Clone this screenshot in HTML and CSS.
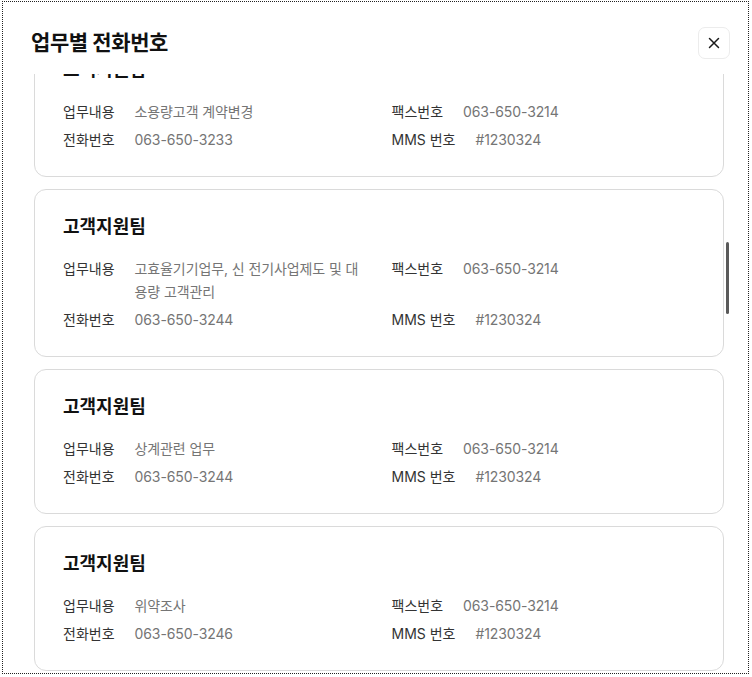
FILE: index.html
```html
<!DOCTYPE html>
<html lang="ko">
<head>
<meta charset="utf-8">
<title>업무별 전화번호</title>
<link rel="stylesheet" href="styles.css">
</head>
<body>
<div class="modal">
  <div class="header">
    <h1 class="title">업무별 전화번호</h1>
    <button class="close" type="button" aria-label="닫기">
      <svg width="12" height="12" viewBox="0 0 12 12"><path d="M1.5 1.5 L10.5 10.5 M10.5 1.5 L1.5 10.5" stroke="#1a1a1a" stroke-width="1.5" stroke-linecap="round" fill="none"/></svg>
    </button>
  </div>
  <div class="body">
    <div class="list">
      <div class="card">
        <h2 class="card-title">고객지원팀</h2>
        <div class="grid">
          <div class="item"><span class="label">업무내용</span><span class="value">소용량고객 계약변경</span></div>
          <div class="item"><span class="label">팩스번호</span><span class="value">063-650-3214</span></div>
          <div class="item"><span class="label">전화번호</span><span class="value">063-650-3233</span></div>
          <div class="item"><span class="label">MMS 번호</span><span class="value">#1230324</span></div>
        </div>
      </div>
      <div class="card">
        <h2 class="card-title">고객지원팀</h2>
        <div class="grid">
          <div class="item"><span class="label">업무내용</span><span class="value">고효율기기업무, 신 전기사업제도 및 대용량 고객관리</span></div>
          <div class="item"><span class="label">팩스번호</span><span class="value">063-650-3214</span></div>
          <div class="item"><span class="label">전화번호</span><span class="value">063-650-3244</span></div>
          <div class="item"><span class="label">MMS 번호</span><span class="value">#1230324</span></div>
        </div>
      </div>
      <div class="card">
        <h2 class="card-title">고객지원팀</h2>
        <div class="grid">
          <div class="item"><span class="label">업무내용</span><span class="value">상계관련 업무</span></div>
          <div class="item"><span class="label">팩스번호</span><span class="value">063-650-3214</span></div>
          <div class="item"><span class="label">전화번호</span><span class="value">063-650-3244</span></div>
          <div class="item"><span class="label">MMS 번호</span><span class="value">#1230324</span></div>
        </div>
      </div>
      <div class="card">
        <h2 class="card-title">고객지원팀</h2>
        <div class="grid">
          <div class="item"><span class="label">업무내용</span><span class="value">위약조사</span></div>
          <div class="item"><span class="label">팩스번호</span><span class="value">063-650-3214</span></div>
          <div class="item"><span class="label">전화번호</span><span class="value">063-650-3246</span></div>
          <div class="item"><span class="label">MMS 번호</span><span class="value">#1230324</span></div>
        </div>
      </div>
    </div>
    <div class="scroll-thumb"></div>
  </div>
</div>
</body>
</html>
```
FILE: styles.css
```css
* { box-sizing: border-box; }
html, body { margin: 0; padding: 0; background: #fff; }
body {
  font-family: Inter, "Noto Sans CJK KR", sans-serif;
  color: #222;
}
.modal {
  margin: 1px 0 0 2px;
  width: 747px;
  height: 673px;
  border: 1px dotted #222;
  display: flex;
  flex-direction: column;
  overflow: hidden;
  background: #fff;
}
.header {
  display: flex;
  justify-content: space-between;
  align-items: center;
  padding: 25px 18px 15px 28px;
  flex: none;
}
.title {
  margin: 0;
  font-size: 21px;
  line-height: 28px;
  font-weight: 700;
  color: #111;
  letter-spacing: -0.4px;
}
.close {
  width: 32px;
  height: 32px;
  border: 1px solid #ececec;
  border-radius: 7px;
  background: #fff;
  padding: 0;
  display: flex;
  align-items: center;
  justify-content: center;
}
.body {
  flex: 1;
  overflow: hidden;
  position: relative;
  padding: 0 24px 0 31px;
}
.list {
  margin-top: -42px;
  display: flex;
  flex-direction: column;
  gap: 12px;
}
.card {
  border: 1px solid #dadada;
  border-radius: 12px;
  padding: 27px 28px 25px;
  background: #fff;
}
.card-title {
  margin: 0 0 20px;
  font-size: 18px;
  line-height: 20px;
  font-weight: 700;
  color: #111;
}
.grid {
  display: grid;
  grid-template-columns: 1fr 1fr;
  column-gap: 25px;
  row-gap: 5px;
  align-items: start;
}
.item {
  display: flex;
  gap: 20px;
  font-size: 14px;
  line-height: 23px;
}
.label {
  flex: none;
  color: #333;
}
.value {
  color: #757575;
  min-width: 0;
  letter-spacing: -0.1px;
}
.scroll-thumb {
  position: absolute;
  left: 723px;
  top: 168px;
  width: 3px;
  height: 72px;
  border-radius: 2px;
  background: #5a5a5a;
}
```
